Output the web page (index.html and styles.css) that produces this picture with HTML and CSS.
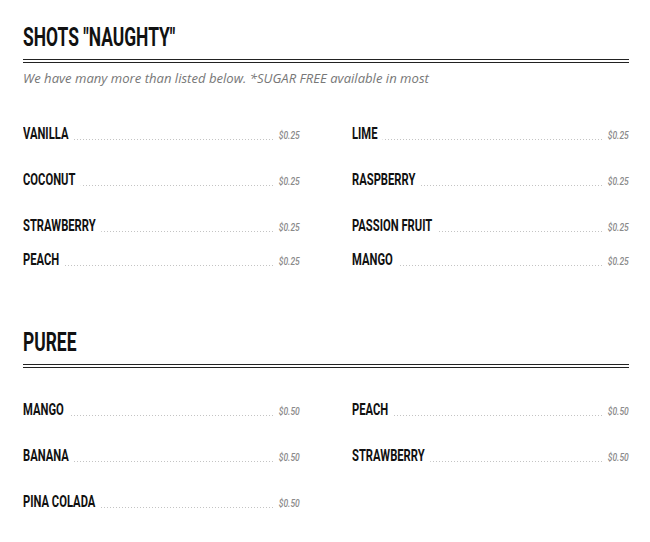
FILE: index.html
```html
<!DOCTYPE html>
<html lang="en">
<head>
<meta charset="utf-8">
<title>Menu</title>
<link rel="stylesheet" href="styles.css">
</head>
<body>
<main class="menu">
  <section class="section section--shots">
    <h2 class="section-title"><span class="title-text">SHOTS "NAUGHTY"</span></h2>
    <p class="section-note">We have many more than listed below. *SUGAR FREE available in most</p>
    <div class="items">
      <div class="item"><span class="item-name">VANILLA</span><span class="item-price">$0.25</span></div>
      <div class="item"><span class="item-name">LIME</span><span class="item-price">$0.25</span></div>
      <div class="item"><span class="item-name">COCONUT</span><span class="item-price">$0.25</span></div>
      <div class="item"><span class="item-name">RASPBERRY</span><span class="item-price">$0.25</span></div>
      <div class="item"><span class="item-name">STRAWBERRY</span><span class="item-price">$0.25</span></div>
      <div class="item"><span class="item-name">PASSION FRUIT</span><span class="item-price">$0.25</span></div>
      <div class="item item--tight"><span class="item-name">PEACH</span><span class="item-price">$0.25</span></div>
      <div class="item item--tight"><span class="item-name">MANGO</span><span class="item-price">$0.25</span></div>
    </div>
  </section>
  <section class="section section--puree">
    <h2 class="section-title"><span class="title-text">PUREE</span></h2>
    <div class="items">
      <div class="item"><span class="item-name">MANGO</span><span class="item-price">$0.50</span></div>
      <div class="item"><span class="item-name">PEACH</span><span class="item-price">$0.50</span></div>
      <div class="item"><span class="item-name">BANANA</span><span class="item-price">$0.50</span></div>
      <div class="item"><span class="item-name">STRAWBERRY</span><span class="item-price">$0.50</span></div>
      <div class="item"><span class="item-name">PINA COLADA</span><span class="item-price">$0.50</span></div>
    </div>
  </section>
</main>
</body>
</html>
```

FILE: styles.css
```css
* { box-sizing: border-box; }

html, body {
  margin: 0;
  padding: 0;
  background: #fff;
}

body {
  font-family: "Roboto", "Liberation Sans", sans-serif;
  color: #111;
}

.menu {
  padding: 0 21px 0 23px;
}

.section-title {
  margin: 0;
  font-size: 26px;
  line-height: 30px;
  font-weight: 700;
  color: #111;
  padding-bottom: 7px;
  border-bottom: 4px double #222;
}

.title-text {
  display: inline-block;
  transform: scaleX(0.67);
  transform-origin: left center;
  white-space: nowrap;
}

.section--shots .section-title {
  margin-top: 22px;
}

.section--puree .section-title {
  margin-top: 57px;
}

.section-note {
  margin: 7px 0 0;
  font-family: "Open Sans", sans-serif;
  font-style: italic;
  font-size: 13.1px;
  line-height: 17px;
  color: #777;
}

.items {
  display: grid;
  grid-template-columns: 1fr 1fr;
  column-gap: 52px;
  row-gap: 26px;
}

.section--shots .items { margin-top: 37px; }
.section--puree .items { margin-top: 32px; }

.item {
  display: flex;
  justify-content: space-between;
  align-items: baseline;
  height: 20px;
  line-height: 20px;
  background-image: linear-gradient(to right, #c4c4c4 1px, transparent 1px);
  background-size: 3px 1px;
  background-repeat: repeat-x;
  background-position: 0 15px;
}

.item--tight { margin-top: -12px; }

.item-name {
  font-size: 16.5px;
  font-weight: 700;
  color: #111;
  background: #fff;
  padding-right: 8px;
  white-space: nowrap;
  transform: scaleX(0.68);
  transform-origin: left center;
}

.item-price {
  font-size: 10px;
  font-style: italic;
  font-weight: 500;
  color: #8a8a8a;
  background: #fff;
  padding-left: 5px;
  white-space: nowrap;
  transform: scaleX(0.85);
  transform-origin: right center;
}
```
